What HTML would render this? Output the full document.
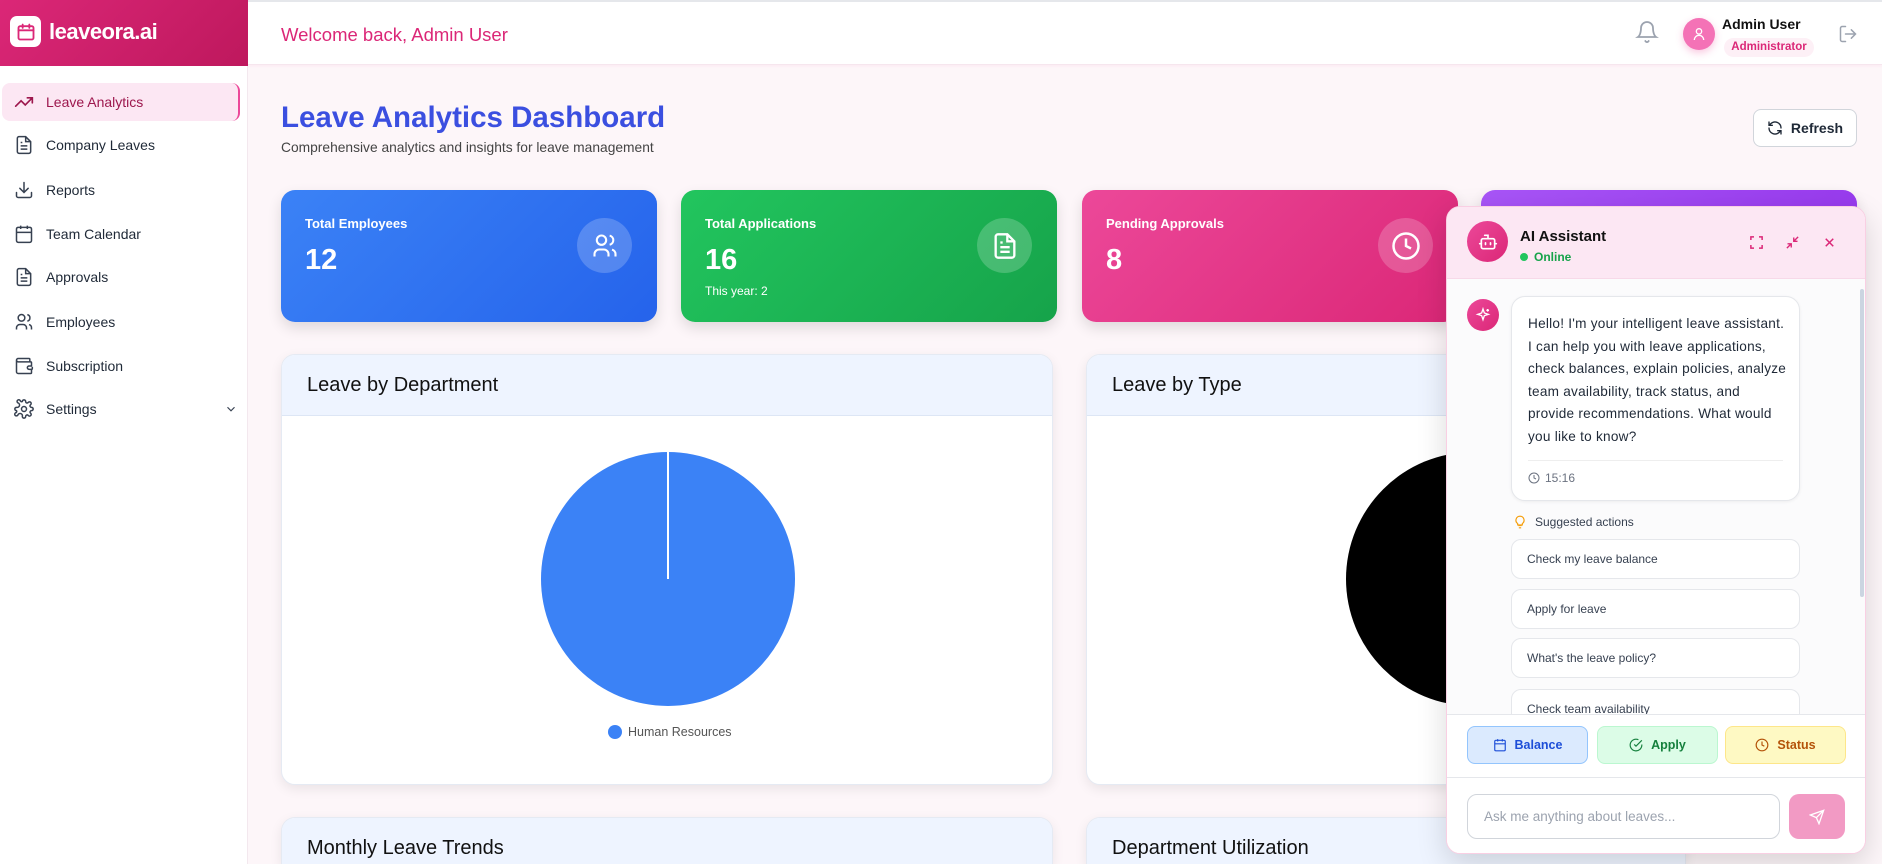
<!DOCTYPE html>
<html><head><meta charset="utf-8"><style>
*{box-sizing:border-box;margin:0;padding:0}
html{width:1882px;height:864px;overflow:hidden}
body{width:1882px;height:864px;overflow:hidden;font-family:"Liberation Sans",sans-serif;background:#fdf6f9;position:relative;color:#111827}
.abs{position:absolute}
svg{display:block}
.logo{left:0;top:0;width:248px;height:66px;background:linear-gradient(135deg,#db2777,#be185d);}
.hdr{left:248px;top:0;width:1634px;height:65px;background:#fff;border-bottom:1px solid #f6e6ee;border-top:2px solid #e5e7eb;box-shadow:0 1px 3px rgba(236,72,153,.08)}
.side{left:0;top:66px;width:248px;height:798px;background:#fff;border-right:1px solid #f3e8ee}
.item{position:absolute;left:2px;width:238px;height:38px;display:flex;align-items:center;font-size:14px;color:#1f2937}
.item svg{margin-left:12px;margin-right:12px}
.card{position:absolute;top:190px;height:132px;width:376px;border-radius:14px;color:#fff;box-shadow:0 6px 14px rgba(0,0,0,.12)}
.card .l{position:absolute;left:24px;top:26px;font-size:13px;font-weight:bold}
.card .n{position:absolute;left:24px;top:54px;font-size:29px;font-weight:bold}
.card .ic{position:absolute;left:296px;top:28px;width:55px;height:55px;border-radius:50%;background:rgba(255,255,255,.2);display:flex;align-items:center;justify-content:center}
.panel{position:absolute;background:#fff;border-radius:14px;border:1px solid #e5eaf3;box-shadow:0 4px 12px rgba(0,0,0,.08);overflow:hidden}
.panel .ph{height:61px;background:#eef4ff;border-bottom:1px solid #dde6f5;padding-left:25px;font-size:20px;line-height:61px;color:#111}
.chat{left:1446px;top:206px;width:420px;height:648px;background:#fff;border:1px solid #f9cfe3;border-radius:14px;box-shadow:0 10px 30px rgba(0,0,0,.15);overflow:hidden}
.sug{position:absolute;left:64px;width:289px;height:40px;border:1px solid #e5e7eb;border-radius:10px;background:#fff;font-size:12px;color:#374151;padding-left:15px;line-height:38px}
.qb{position:absolute;top:519px;height:38px;border-radius:8px;display:flex;align-items:center;justify-content:center;font-size:12.5px;font-weight:bold}
.qb svg{margin-right:8px}
</style></head><body>

<div class="abs logo">
  <div class="abs" style="left:10px;top:16px;width:31px;height:31px;background:#fff;border-radius:7px;display:flex;align-items:center;justify-content:center">
    <svg width="20" height="20" viewBox="0 0 24 24" fill="none" stroke="#db2777" stroke-width="2.2" stroke-linecap="round"><rect x="3" y="5" width="18" height="16" rx="2"/><path d="M3 10h18M8 3v4M16 3v4"/></svg>
  </div>
  <div class="abs" style="left:49px;top:19px;font-size:22px;font-weight:bold;color:#fff;letter-spacing:-.5px">leaveora.ai</div>
</div>

<div class="abs hdr">
  <div class="abs" style="left:33px;top:22px;font-size:18.5px;color:#db2777">Welcome back, Admin User</div>
  <svg class="abs" style="left:1387px;top:18px" width="24" height="24" viewBox="0 0 24 24" fill="none" stroke="#9ca3af" stroke-width="1.8" stroke-linecap="round"><path d="M6 8a6 6 0 0 1 12 0c0 7 3 9 3 9H3s3-2 3-9"/><path d="M10.3 21a1.9 1.9 0 0 0 3.4 0"/></svg>
  <div class="abs" style="left:1435px;top:16px;width:32px;height:32px;border-radius:50%;background:#f472b6;box-shadow:0 3px 8px rgba(236,72,153,.3);display:flex;align-items:center;justify-content:center">
    <svg width="16" height="16" viewBox="0 0 24 24" fill="none" stroke="#fff" stroke-width="2"><circle cx="12" cy="8" r="4"/><path d="M5 21a7 7 0 0 1 14 0"/></svg>
  </div>
  <div class="abs" style="left:1474px;top:14px;font-size:14px;font-weight:bold;color:#111">Admin User</div>
  <div class="abs" style="left:1476px;top:36px;width:90px;height:19px;border-radius:10px;background:#fdf0f6;color:#db2777;font-size:11.5px;font-weight:bold;text-align:center;line-height:19px">Administrator</div>
  <svg class="abs" style="left:1590px;top:22px" width="20" height="20" viewBox="0 0 24 24" fill="none" stroke="#9ca3af" stroke-width="1.8" stroke-linecap="round"><path d="M9 21H5a2 2 0 0 1-2-2V5a2 2 0 0 1 2-2h4M16 17l5-5-5-5M21 12H9"/></svg>
</div>

<div class="abs side">
  <div class="item" style="top:17px;background:#fce7f3;border-radius:8px;border-right:2px solid #ec4899;color:#9d174d">
    <svg width="20" height="20" viewBox="0 0 24 24" fill="none" stroke="#9d174d" stroke-width="2" stroke-linecap="round"><path d="M22 7l-8.5 8.5-5-5L2 17M16 7h6v6"/></svg>Leave Analytics</div>
  <div class="item" style="top:60px"><svg width="20" height="20" viewBox="0 0 24 24" fill="none" stroke="#374151" stroke-width="1.8"><path d="M14 2H6a2 2 0 0 0-2 2v16a2 2 0 0 0 2 2h12a2 2 0 0 0 2-2V8z"/><path d="M14 2v6h6M8 13h8M8 17h8M8 9h2"/></svg>Company Leaves</div>
  <div class="item" style="top:105px"><svg width="20" height="20" viewBox="0 0 24 24" fill="none" stroke="#374151" stroke-width="1.8" stroke-linecap="round"><path d="M21 15v4a2 2 0 0 1-2 2H5a2 2 0 0 1-2-2v-4M7 10l5 5 5-5M12 15V3"/></svg>Reports</div>
  <div class="item" style="top:149px"><svg width="20" height="20" viewBox="0 0 24 24" fill="none" stroke="#374151" stroke-width="1.8"><rect x="3" y="4" width="18" height="18" rx="2"/><path d="M16 2v4M8 2v4M3 10h18"/></svg>Team Calendar</div>
  <div class="item" style="top:192px"><svg width="20" height="20" viewBox="0 0 24 24" fill="none" stroke="#374151" stroke-width="1.8"><path d="M14 2H6a2 2 0 0 0-2 2v16a2 2 0 0 0 2 2h12a2 2 0 0 0 2-2V8z"/><path d="M14 2v6h6M8 13h8M8 17h8M8 9h2"/></svg>Approvals</div>
  <div class="item" style="top:237px"><svg width="20" height="20" viewBox="0 0 24 24" fill="none" stroke="#374151" stroke-width="1.8"><circle cx="9" cy="7" r="4"/><path d="M3 21v-2a4 4 0 0 1 4-4h4a4 4 0 0 1 4 4v2M16 3.1a4 4 0 0 1 0 7.8M21 21v-2a4 4 0 0 0-3-3.9"/></svg>Employees</div>
  <div class="item" style="top:281px"><svg width="20" height="20" viewBox="0 0 24 24" fill="none" stroke="#374151" stroke-width="1.8"><path d="M19 7V4a1 1 0 0 0-1-1H5a2 2 0 0 0 0 4h15a1 1 0 0 1 1 1v4h-3a2 2 0 0 0 0 4h3a1 1 0 0 0 1-1v-2M3 5v14a2 2 0 0 0 2 2h15a1 1 0 0 0 1-1v-4"/></svg>Subscription</div>
  <div class="item" style="top:324px"><svg width="20" height="20" viewBox="0 0 24 24" fill="none" stroke="#374151" stroke-width="1.8"><circle cx="12" cy="12" r="3"/><path d="M19.4 15a1.7 1.7 0 0 0 .3 1.8l.1.1a2 2 0 1 1-2.8 2.8l-.1-.1a1.7 1.7 0 0 0-2.9 1.200V21a2 2 0 0 1-4 0v-.1A1.7 1.7 0 0 0 4.6 19.4l-.1.1a2 2 0 1 1-2.8-2.8l.1-.1A1.7 1.7 0 0 0 3 14H3a2 2 0 0 1 0-4h.1A1.7 1.7 0 0 0 4.6 4.6l-.1-.1a2 2 0 1 1 2.8-2.8l.1.1A1.7 1.7 0 0 0 10 3V3a2 2 0 0 1 4 0v.1a1.7 1.7 0 0 0 2.9 1.2l.1-.1a2 2 0 1 1 2.8 2.8l-.1.1A1.7 1.7 0 0 0 21 10h0a2 2 0 0 1 0 4h-.1a1.7 1.7 0 0 0-1.5 1z"/></svg>Settings
  <svg style="position:absolute;left:210px" width="14" height="14" viewBox="0 0 24 24" fill="none" stroke="#374151" stroke-width="2"><path d="M6 9l6 6 6-6"/></svg></div>
</div>

<div class="abs" style="left:281px;top:101px;font-size:29.5px;font-weight:bold;color:#3b4fe0">Leave Analytics Dashboard</div>
<div class="abs" style="left:281px;top:140px;font-size:13.8px;color:#444">Comprehensive analytics and insights for leave management</div>
<div class="abs" style="left:1753px;top:109px;width:104px;height:38px;border:1px solid #d1d5db;border-radius:8px;background:#fff;display:flex;align-items:center;justify-content:center;font-size:14px;font-weight:bold;color:#1f2937">
  <svg width="16" height="16" viewBox="0 0 24 24" fill="none" stroke="#1f2937" stroke-width="2" stroke-linecap="round" style="margin-right:8px"><path d="M21 12a9 9 0 0 0-15-6.7L3 8M3 3v5h5M3 12a9 9 0 0 0 15 6.7l3-2.7M21 21v-5h-5"/></svg>Refresh</div>

<div class="card" style="left:281px;background:linear-gradient(135deg,#3b82f6,#2563eb)"><div class="l">Total Employees</div><div class="n">12</div>
  <div class="ic"><svg width="28" height="28" viewBox="0 0 24 24" fill="none" stroke="#fff" stroke-width="1.8"><circle cx="9" cy="7" r="4"/><path d="M3 21v-2a4 4 0 0 1 4-4h4a4 4 0 0 1 4 4v2M16 3.1a4 4 0 0 1 0 7.8M21 21v-2a4 4 0 0 0-3-3.9"/></svg></div></div>
<div class="card" style="left:681px;background:linear-gradient(135deg,#22c55e,#16a34a)"><div class="l">Total Applications</div><div class="n">16</div>
  <div class="abs" style="left:24px;top:94px;font-size:12px">This year: 2</div>
  <div class="ic"><svg width="28" height="28" viewBox="0 0 24 24" fill="none" stroke="#fff" stroke-width="2"><path d="M14 2H6a2 2 0 0 0-2 2v16a2 2 0 0 0 2 2h12a2 2 0 0 0 2-2V8z"/><path d="M14 2v6h6M8 13h8M8 17h8M8 9h2"/></svg></div></div>
<div class="card" style="left:1082px;background:linear-gradient(135deg,#ec4899,#db2777)"><div class="l">Pending Approvals</div><div class="n">8</div>
  <div class="ic"><svg width="30" height="30" viewBox="0 0 24 24" fill="none" stroke="#fff" stroke-width="2"><circle cx="12" cy="12" r="10"/><path d="M12 6v6l4 2"/></svg></div></div>
<div class="card" style="left:1481px;background:linear-gradient(135deg,#a855f7,#9333ea)"></div>

<div class="panel" style="left:281px;top:354px;width:772px;height:431px"><div class="ph">Leave by Department</div>
  <svg class="abs" style="left:258px;top:96px" width="256" height="256"><circle cx="128" cy="128" r="127" fill="#3b82f6"/><line x1="128" y1="1" x2="128" y2="128" stroke="#fff" stroke-width="2"/></svg>
  <div class="abs" style="left:326px;top:370px;font-size:12.5px;color:#555;display:flex;align-items:center"><span style="width:14px;height:14px;border-radius:50%;background:#3b82f6;margin-right:6px"></span>Human Resources</div>
</div>
<div class="panel" style="left:1086px;top:354px;width:600px;height:431px"><div class="ph">Leave by Type</div>
  <svg class="abs" style="left:258px;top:96px" width="256" height="256"><circle cx="128" cy="128" r="127" fill="#000"/></svg></div>
<div class="panel" style="left:281px;top:817px;width:772px;height:47px;border-bottom:none;border-radius:14px 14px 0 0"><div class="ph">Monthly Leave Trends</div></div>
<div class="panel" style="left:1086px;top:817px;width:600px;height:47px;border-bottom:none;border-radius:14px 14px 0 0"><div class="ph">Department Utilization</div></div>

<div class="abs chat">
  <div class="abs" style="left:0;top:0;width:420px;height:72px;background:#fce7f3;border-bottom:1px solid #f7d9e8"></div>
  <div class="abs" style="left:20px;top:14px;width:41px;height:41px;border-radius:50%;background:linear-gradient(135deg,#ec4899,#db2777);display:flex;align-items:center;justify-content:center">
    <svg width="20" height="20" viewBox="0 0 24 24" fill="none" stroke="#fff" stroke-width="2" stroke-linecap="round"><rect x="4" y="8" width="16" height="12" rx="2"/><path d="M12 8V4H8M2 14h2M20 14h2M9 13v2M15 13v2"/></svg></div>
  <div class="abs" style="left:73px;top:21px;font-size:15px;font-weight:bold;color:#111">AI Assistant</div>
  <div class="abs" style="left:73px;top:43px;font-size:12px;font-weight:bold;color:#16a34a;display:flex;align-items:center"><span style="width:8px;height:8px;border-radius:50%;background:#22c55e;margin-right:6px"></span>Online</div>
  <svg class="abs" style="left:302px;top:28px" width="15" height="15" viewBox="0 0 24 24" fill="none" stroke="#db2777" stroke-width="2.4"><path d="M3 8V3h5M16 3h5v5M21 16v5h-5M8 21H3v-5"/></svg>
  <svg class="abs" style="left:338px;top:28px" width="15" height="15" viewBox="0 0 24 24" fill="none" stroke="#db2777" stroke-width="2.2"><path d="M4 14h6v6M20 10h-6V4M14 10l7-7M3 21l7-7"/></svg>
  <svg class="abs" style="left:375px;top:28px" width="15" height="15" viewBox="0 0 24 24" fill="none" stroke="#db2777" stroke-width="2.4"><path d="M18 6L6 18M6 6l12 12"/></svg>
  <div class="abs" style="left:0;top:72px;width:420px;height:441px;background:#fbfbfc"></div>
  <div class="abs" style="left:20px;top:92px;width:32px;height:32px;border-radius:50%;background:linear-gradient(135deg,#ec4899,#db2777);display:flex;align-items:center;justify-content:center">
    <svg width="16" height="16" viewBox="0 0 24 24" fill="none" stroke="#fff" stroke-width="2"><path d="M12 3l2 6 6 2-6 2-2 6-2-6-6-2 6-2zM19 3v4M17 5h4"/></svg></div>
  <div class="abs" style="left:64px;top:89px;width:289px;height:205px;background:#fff;border:1px solid #e5e7eb;border-radius:14px;box-shadow:0 1px 3px rgba(0,0,0,.06)">
    <div style="position:absolute;left:16px;top:16px;white-space:nowrap;font-size:13.6px;line-height:22.6px;color:#1f2937;letter-spacing:.25px">Hello! I'm your intelligent leave assistant.<br>I can help you with leave applications,<br>check balances, explain policies, analyze<br>team availability, track status, and<br>provide recommendations. What would<br>you like to know?</div>
    <div style="position:absolute;left:16px;right:16px;top:163px;border-top:1px solid #eee"></div>
    <div style="position:absolute;left:16px;top:174px;font-size:12px;color:#6b7280;display:flex;align-items:center"><svg width="12" height="12" viewBox="0 0 24 24" fill="none" stroke="#6b7280" stroke-width="2" style="margin-right:5px"><circle cx="12" cy="12" r="10"/><path d="M12 6v6l4 2"/></svg>15:16</div>
  </div>
  <div class="abs" style="left:66px;top:308px;font-size:12px;color:#374151;display:flex;align-items:center"><svg width="14" height="14" viewBox="0 0 24 24" fill="none" stroke="#f59e0b" stroke-width="2" style="margin-right:8px"><path d="M9 18h6M10 22h4M12 2a7 7 0 0 0-4 12.7V17h8v-2.3A7 7 0 0 0 12 2z"/></svg>Suggested actions</div>
  <div class="sug" style="top:332px">Check my leave balance</div>
  <div class="sug" style="top:382px">Apply for leave</div>
  <div class="sug" style="top:431px">What's the leave policy?</div>
  <div class="sug" style="top:482px">Check team availability</div>
  <div class="abs" style="left:413px;top:82px;width:4px;height:308px;background:#cbd5e1;border-radius:2px"></div>
  <div class="abs" style="left:0;top:507px;width:420px;height:64px;background:#fff;border-top:1px solid #e5e7eb"></div>
  <div class="qb" style="left:20px;width:121px;background:#dbeafe;border:1px solid #93c5fd;color:#1d4ed8"><svg width="14" height="14" viewBox="0 0 24 24" fill="none" stroke="#1d4ed8" stroke-width="2"><rect x="3" y="4" width="18" height="18" rx="2"/><path d="M16 2v4M8 2v4M3 10h18"/></svg>Balance</div>
  <div class="qb" style="left:150px;width:121px;background:#dcfce7;border:1px solid #bbf7d0;color:#15803d"><svg width="14" height="14" viewBox="0 0 24 24" fill="none" stroke="#15803d" stroke-width="2"><path d="M22 11.1V12a10 10 0 1 1-5.9-9.1M22 4L12 14l-3-3"/></svg>Apply</div>
  <div class="qb" style="left:278px;width:121px;background:#fef9c3;border:1px solid #fde68a;color:#b45309"><svg width="14" height="14" viewBox="0 0 24 24" fill="none" stroke="#b45309" stroke-width="2"><circle cx="12" cy="12" r="10"/><path d="M12 6v6l4 2"/></svg>Status</div>
  <div class="abs" style="left:0;top:570px;width:420px;height:78px;background:#fff;border-top:1px solid #e5e7eb"></div>
  <div class="abs" style="left:20px;top:587px;width:313px;height:45px;border:1px solid #d1d5db;border-radius:10px;font-size:13.5px;color:#9ca3af;line-height:43px;padding-left:16px">Ask me anything about leaves...</div>
  <div class="abs" style="left:342px;top:587px;width:56px;height:45px;border-radius:10px;background:#f29ac4;display:flex;align-items:center;justify-content:center">
    <svg width="16" height="16" viewBox="0 0 24 24" fill="none" stroke="#fff" stroke-width="2"><path d="M22 2L11 13M22 2l-7 20-4-9-9-4z"/></svg></div>
</div>
</body></html>
